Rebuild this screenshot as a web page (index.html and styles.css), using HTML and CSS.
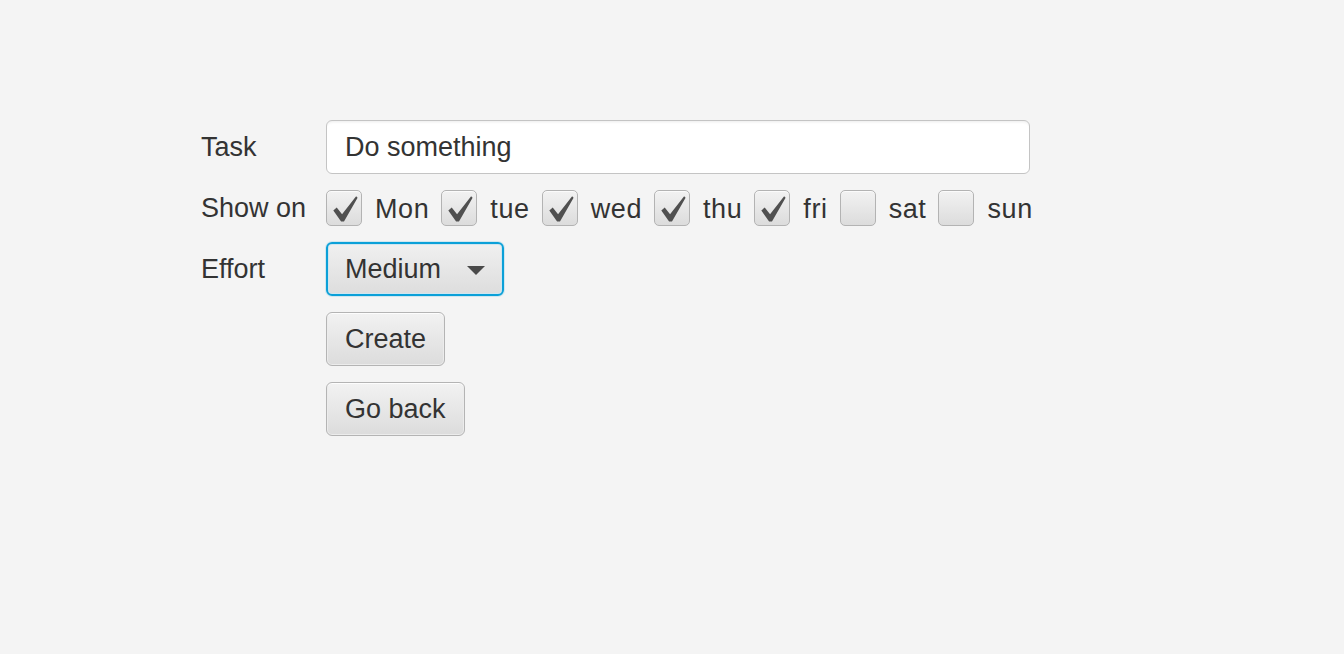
FILE: index.html
```html
<!DOCTYPE html>
<html>
<head>
<meta charset="utf-8">
<link rel="stylesheet" href="styles.css">
</head>
<body>
<div class="page">
  <div class="form">
    <div class="label">Task</div>
    <div class="textfield">Do something</div>

    <div class="label">Show on</div>
    <div class="days">
      <div class="check"><span class="box"><svg viewBox="0 0 35 35" width="35" height="35"><path d="M6.5 19.5 L10 16.5 L15.5 23.5 L30 5 L31.5 6.5 L17.5 31 L14.5 31 Z" fill="#505050"/></svg></span><span class="ctext">Mon</span></div>
      <div class="check"><span class="box"><svg viewBox="0 0 35 35" width="35" height="35"><path d="M6.5 19.5 L10 16.5 L15.5 23.5 L30 5 L31.5 6.5 L17.5 31 L14.5 31 Z" fill="#505050"/></svg></span><span class="ctext">tue</span></div>
      <div class="check"><span class="box"><svg viewBox="0 0 35 35" width="35" height="35"><path d="M6.5 19.5 L10 16.5 L15.5 23.5 L30 5 L31.5 6.5 L17.5 31 L14.5 31 Z" fill="#505050"/></svg></span><span class="ctext">wed</span></div>
      <div class="check"><span class="box"><svg viewBox="0 0 35 35" width="35" height="35"><path d="M6.5 19.5 L10 16.5 L15.5 23.5 L30 5 L31.5 6.5 L17.5 31 L14.5 31 Z" fill="#505050"/></svg></span><span class="ctext">thu</span></div>
      <div class="check"><span class="box"><svg viewBox="0 0 35 35" width="35" height="35"><path d="M6.5 19.5 L10 16.5 L15.5 23.5 L30 5 L31.5 6.5 L17.5 31 L14.5 31 Z" fill="#505050"/></svg></span><span class="ctext">fri</span></div>
      <div class="check"><span class="box"></span><span class="ctext">sat</span></div>
      <div class="check"><span class="box"></span><span class="ctext">sun</span></div>
    </div>

    <div class="label">Effort</div>
    <div class="cell">
      <div class="combo"><span>Medium</span><svg class="arrow" viewBox="0 0 18 9" width="18" height="9"><path d="M0 0 H18 L9 9 Z" fill="#4a4a4a"/></svg></div>
    </div>

    <div class="label"></div>
    <div class="cell"><div class="button">Create</div></div>

    <div class="label"></div>
    <div class="cell"><div class="button">Go back</div></div>
  </div>
</div>
</body>
</html>
```

FILE: styles.css
```css
html, body {
  margin: 0;
  padding: 0;
  background: #f4f4f4;
}
body {
  font-family: "Liberation Sans", Arial, sans-serif;
  font-size: 27px;
  color: #333333;
}
.page {
  padding: 120px 0 0 201px;
}
.form {
  display: grid;
  grid-template-columns: 125px 704px;
  row-gap: 16px;
  align-items: center;
}
.label {
  line-height: 30px;
}
.textfield {
  box-sizing: border-box;
  height: 54px;
  border: 1px solid #c4c4c4;
  border-radius: 6px;
  background: #ffffff;
  box-shadow: inset 0 3px 3px -2px rgba(0,0,0,0.08);
  padding-left: 18px;
  display: flex;
  align-items: center;
}
.days {
  display: flex;
  align-items: center;
  height: 36px;
  gap: 12px;
}
.check {
  display: flex;
  align-items: center;
  gap: 13px;
}
.ctext {
  padding-top: 2px;
  letter-spacing: 0.6px;
}
.box {
  box-sizing: border-box;
  width: 36px;
  height: 36px;
  border: 1px solid #b3b3b3;
  border-radius: 5px;
  background: linear-gradient(#f2f2f2, #dcdcdc);
  box-shadow: inset 0 1px 0 #fbfbfb;
  display: flex;
  align-items: center;
  justify-content: center;
}
.box svg {
  display: block;
}
.cell {
  display: flex;
}
.combo {
  box-sizing: border-box;
  width: 178px;
  height: 54px;
  border: 2px solid #0ba0d8;
  border-radius: 6px;
  background: linear-gradient(#f0f0f0, #dddddd);
  box-shadow: inset 0 0 0 1px #cfe6f0, 0 0 0 1px rgba(11,160,216,0.15);
  display: flex;
  align-items: center;
  justify-content: space-between;
  padding: 0 17px 0 17px;
}
.arrow {
  display: block;
  margin-top: 2px;
}
.button {
  box-sizing: border-box;
  height: 54px;
  border: 1px solid #b4b4b4;
  border-radius: 6px;
  background: linear-gradient(#f2f2f2, #dcdcdc);
  box-shadow: inset 0 1px 0 #fdfdfd, inset 0 0 0 1px #ececec;
  display: flex;
  align-items: center;
  padding: 0 18px 0 18px;
}
```
